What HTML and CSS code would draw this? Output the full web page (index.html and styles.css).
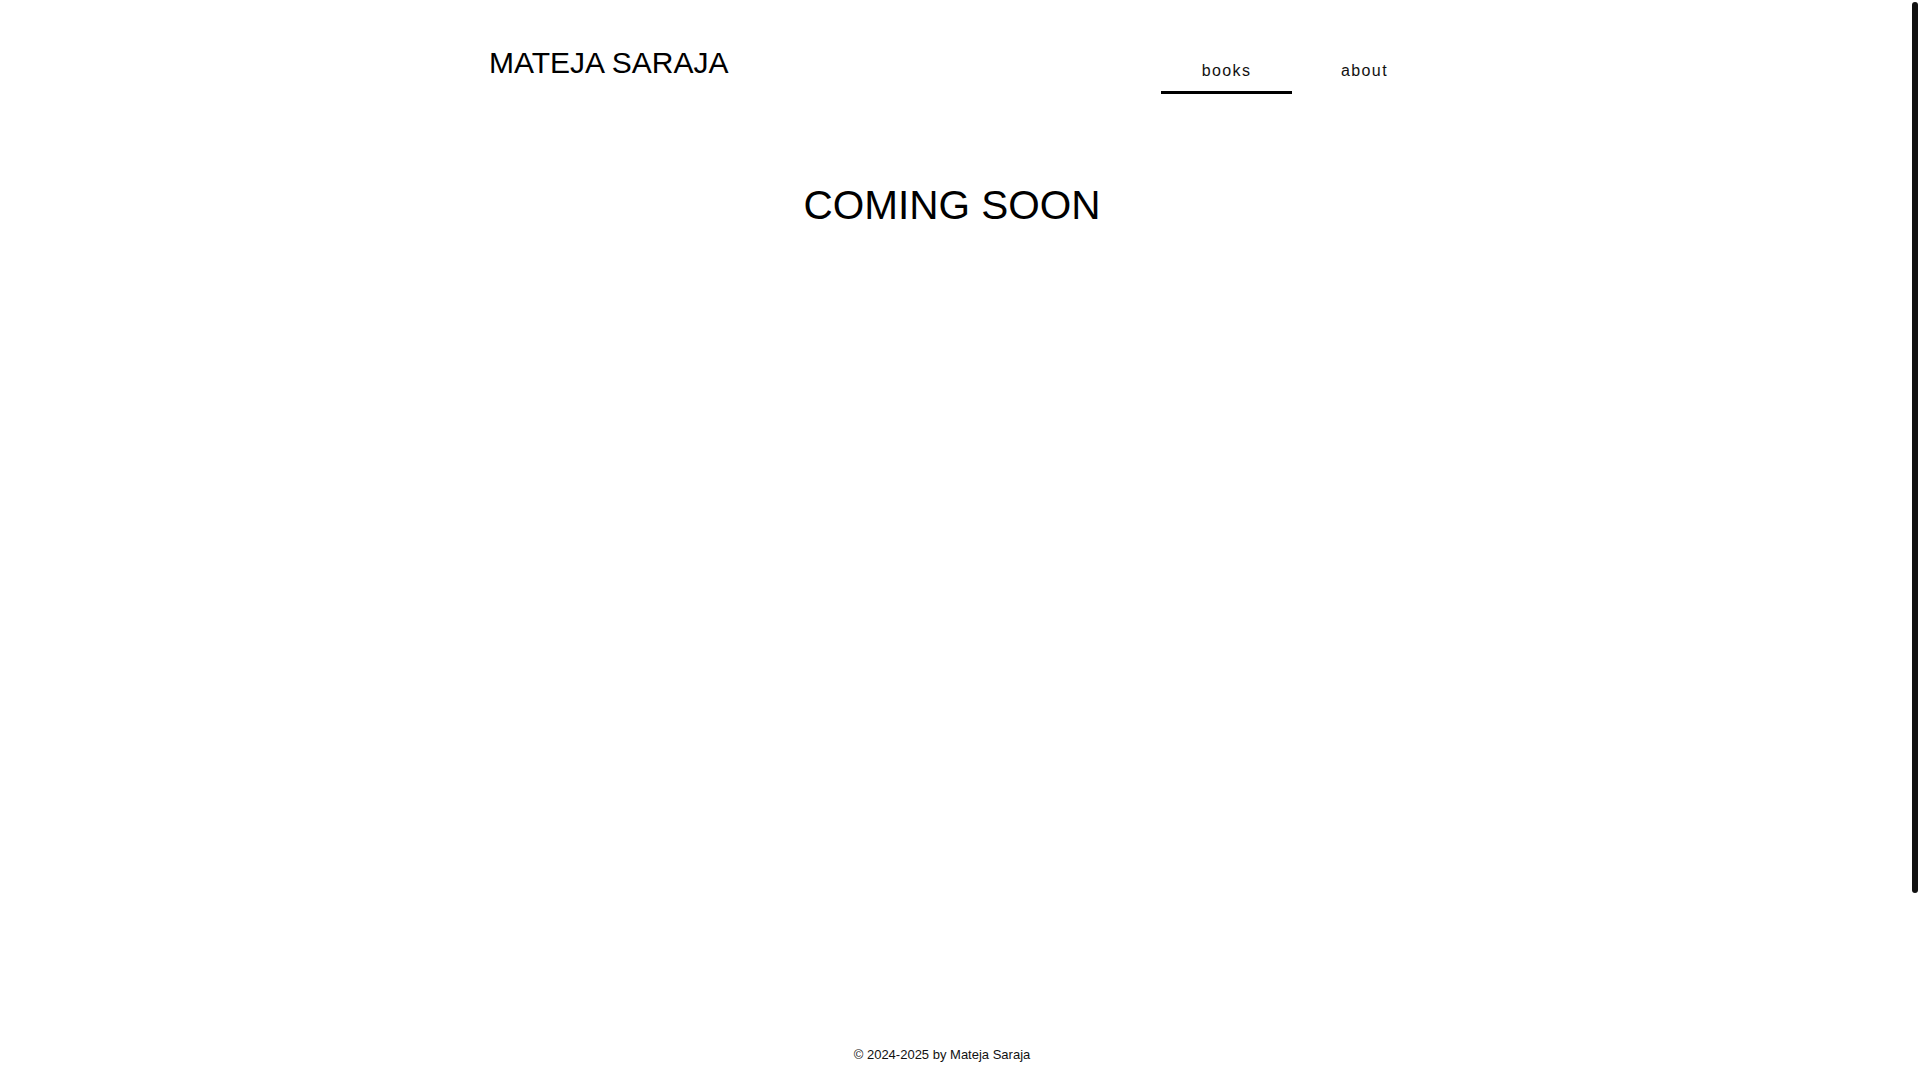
FILE: index.html
```html
<!DOCTYPE html>
<html lang="en">
<head>
<meta charset="utf-8">
<title>Mateja Saraja</title>
<link rel="stylesheet" href="styles.css">
</head>
<body>
<div class="page">
  <header class="site-header">
    <div class="brand">MATEJA SARAJA</div>
    <nav class="nav">
      <a class="nav-item active" href="#">books</a>
      <a class="nav-item" href="#">about</a>
    </nav>
  </header>
  <main class="main">
    <h1 class="coming">COMING SOON</h1>
  </main>
  <footer class="footer">© 2024-2025 by Mateja Saraja</footer>
</div>
<div class="scroll-thumb" aria-hidden="true"></div>
</body>
</html>
```

FILE: styles.css
```css
html {
  background: #fff;
}
body {
  margin: 0;
  font-family: "Liberation Sans", Arial, sans-serif;
  color: #000;
  overflow: hidden;
}
.page {
  margin-right: 10px;
  height: 1080px;
  display: flex;
  flex-direction: column;
}
.scroll-thumb {
  position: fixed;
  top: 2px;
  right: 2px;
  width: 6px;
  height: 891px;
  background: #111;
  border-radius: 3px;
}
.site-header {
  width: 980px;
  margin: 0 auto;
  display: flex;
  justify-content: space-between;
  align-items: flex-start;
  box-sizing: border-box;
  padding: 0 15px 0 24px;
}
.brand {
  margin-top: 46px;
  font-size: 30px;
  line-height: 34px;
  color: #000;
}
.nav {
  margin-top: 62px;
  display: flex;
  gap: 7px;
}
.nav-item {
  width: 131px;
  text-align: center;
  font-size: 16px;
  line-height: 18px;
  letter-spacing: 1.4px;
  color: #111;
  text-decoration: none;
  padding-bottom: 11px;
  border-bottom: 3px solid transparent;
}
.nav-item.active {
  border-bottom-color: #000;
}
.main {
  width: 980px;
  margin: 0 auto;
  box-sizing: border-box;
  padding-right: 6px;
  height: 953px;
}
.coming {
  margin: 88px 0 0;
  text-align: center;
  font-size: 40.5px;
  line-height: 46px;
  font-weight: normal;
  color: #000;
}
.footer {
  text-align: center;
  padding-right: 26px;
  font-size: 13px;
  line-height: 15px;
  color: #111;
}
```
